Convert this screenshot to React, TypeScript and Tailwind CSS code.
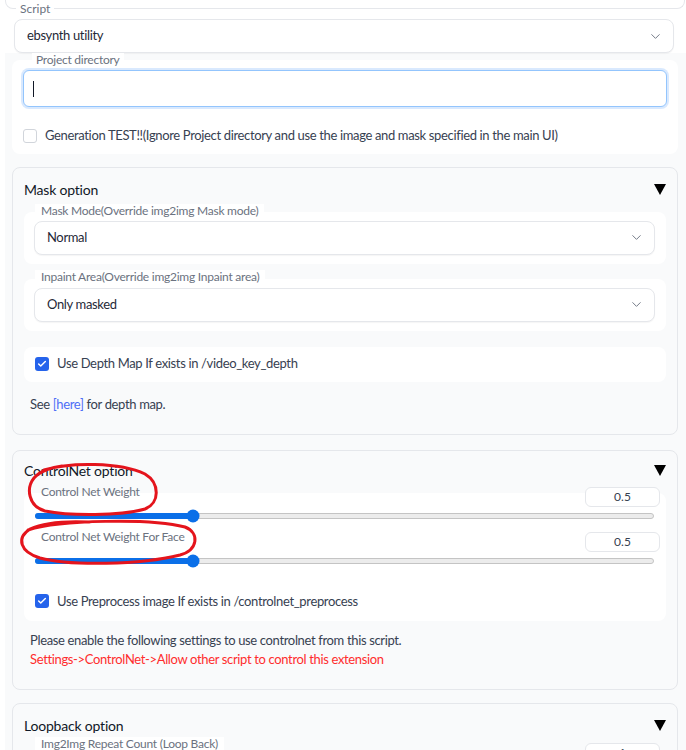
import { ChevronDown, Check } from 'lucide-react';

const font = { fontFamily: 'Lato, "Noto Sans", sans-serif' };

function Caret() {
  return (
    <svg width="12" height="11" viewBox="0 0 12 11" className="shrink-0">
      <polygon points="0,0 12,0 6,11" fill="#000" />
    </svg>
  );
}

function Select({ value }: { value: string }) {
  return (
    <div className="flex h-[34px] items-center justify-between rounded-lg border border-[#e5e7eb] bg-white pl-[12px] pr-[10px] text-[13px] tracking-[-0.35px] text-[#1f2937] shadow-[0_1px_1px_rgba(0,0,0,0.04)]">
      <span>{value}</span>
      <ChevronDown size={15} strokeWidth={1.5} className="text-[#6b7280]" />
    </div>
  );
}

function Box({ checked }: { checked: boolean }) {
  return checked ? (
    <span className="flex h-[14px] w-[14px] shrink-0 items-center justify-center rounded-[3px] bg-[#2563eb]">
      <Check size={10} strokeWidth={3.5} className="text-white" />
    </span>
  ) : (
    <span className="h-[14px] w-[14px] shrink-0 rounded-[3px] border border-[#d1d5db] bg-white" />
  );
}

function Label({ text }: { text: string }) {
  return (
    <span className="relative ml-[11px] block h-[14px] w-fit bg-white px-[6px] text-[12px] leading-[14px] tracking-[-0.25px] text-[#6b7280]">
      {text}
    </span>
  );
}

function SliderRow({ label }: { label: string }) {
  return (
    <div className="flex flex-col">
      <div className="flex h-[20px] items-start justify-between pl-[17px] pr-[6px]">
        <span className="-mt-[3px] text-[12px] leading-4 tracking-[-0.25px] text-[#6b7280]">{label}</span>
        <span className="flex h-[20px] w-[75px] items-center justify-center rounded-md border border-[#e5e7eb] bg-white text-[12px] text-[#374151]">
          0.5
        </span>
      </div>
      <div className="relative mt-[6px] ml-[11px] mr-[12px] h-[6px] rounded-full border border-[#c4c4c4] bg-[#ececec]">
        <div className="absolute -left-px -top-px h-[6px] w-[25.5%] rounded-full bg-[#0b6fe8]" />
        <div className="absolute left-[25.5%] top-1/2 h-[13px] w-[13px] -translate-x-1/2 -translate-y-1/2 rounded-full bg-[#0b6fe8]" />
      </div>
    </div>
  );
}

function Title({ text }: { text: string }) {
  return (
    <div className="flex h-[20px] items-center justify-between text-[14px] tracking-[-0.2px] text-[#111827]">
      <span>{text}</span>
      <Caret />
    </div>
  );
}

export default function App() {
  return (
    <div className="relative h-[750px] w-[686px] overflow-hidden bg-white" style={font}>
      <div className="ml-[5px] h-[9px] w-[680px] rounded-b-lg border border-t-0 border-[#e5e7eb]" />

      <div className="-mt-[8px] flex flex-col px-[14px] pr-[12px]">
        <span className="relative ml-[2px] block h-[15px] w-fit bg-white px-[4px] text-[12px] leading-[15px] text-[#6b7280]">
          Script
        </span>
        <div className="mt-[3px]">
          <Select value="ebsynth utility" />
        </div>
      </div>

      <div className="ml-[5px] flex flex-col bg-[#f9fafb] pl-[7px] pr-[8px]">
        <span className="relative ml-[20px] block h-[13px] w-fit bg-white px-[4px] text-[12px] leading-[13px] tracking-[-0.25px] text-[#6b7280]">
          Project directory
        </span>
        <div className="-mt-[6px] flex flex-col rounded-lg bg-white px-[11px] pt-[10px] pb-[8px]">
          <div className="flex h-[37px] items-center rounded-md border border-[#93c5fd] bg-white pl-[9px] shadow-[0_0_0_2px_rgba(191,219,254,0.6)]">
            <span className="h-[16px] w-px bg-[#111827]" />
          </div>
          <div className="mt-[19px] flex items-center gap-[8px] text-[13px] tracking-[-0.35px] text-[#374151]">
            <Box checked={false} />
            <span>Generation TEST!!(Ignore Project directory and use the image and mask specified in the main UI)</span>
          </div>
        </div>

        {/* Mask option */}
        <div className="mt-[13px] flex flex-col rounded-lg border border-[#e5e7eb] bg-[#f9fafb] px-[11px] pt-[12px] pb-[22px]">
          <Title text="Mask option" />
          <div className="mt-[4px]">
            <Label text="Mask Mode(Override img2img Mask mode)" />
          </div>
          <div className="-mt-[6px] rounded-lg bg-white pl-[10px] pr-[11px] py-[9px]">
            <Select value="Normal" />
          </div>
          <div className="mt-[6px]">
            <Label text="Inpaint Area(Override img2img Inpaint area)" />
          </div>
          <div className="-mt-[5px] rounded-lg bg-white pl-[10px] pr-[11px] py-[9px]">
            <Select value="Only masked" />
          </div>
          <div className="mt-[16px] flex h-[35px] items-center gap-[8px] rounded-lg bg-white pl-[11px] text-[13px] tracking-[-0.35px] text-[#374151]">
            <Box checked />
            <span>Use Depth Map If exists in /video_key_depth</span>
          </div>
          <p className="mt-[14px] pl-[6px] text-[13px] leading-[16px] tracking-[-0.35px] text-[#374151]">
            See <span className="text-[#4f6ef7]">[here]</span> for depth map.
          </p>
        </div>

        {/* ControlNet option */}
        <div className="mt-[15px] flex flex-col rounded-lg border border-[#e5e7eb] bg-[#f9fafb] px-[11px] pt-[10px] pb-[20px]">
          <Title text="ControlNet option" />
          <div className="mt-[12px] flex flex-col rounded-lg bg-white pb-[10px]">
            <div className="-mt-[6px]">
              <SliderRow label="Control Net Weight" />
            </div>
            <div className="mt-[13px]">
              <SliderRow label="Control Net Weight For Face" />
            </div>
            <div className="mt-[28px] flex items-center gap-[8px] pl-[11px] text-[13px] tracking-[-0.35px] text-[#374151]">
              <Box checked />
              <span>Use Preprocess image If exists in /controlnet_preprocess</span>
            </div>
          </div>
          <div className="mt-[10px] flex flex-col pl-[6px] text-[13px] leading-[19px] tracking-[-0.35px]">
            <span className="text-[#374151]">Please enable the following settings to use controlnet from this script.</span>
            <span className="text-[#ff2d2d]">Settings-&gt;ControlNet-&gt;Allow other script to control this extension</span>
          </div>
        </div>

        {/* Loopback option */}
        <div className="mt-[13px] flex flex-col rounded-lg border border-[#e5e7eb] bg-[#f9fafb] px-[11px] pt-[11px] pb-[20px]">
          <Title text="Loopback option" />
          <div className="mt-[2px] flex items-start justify-between pr-[6px]">
            <Label text="Img2Img Repeat Count (Loop Back)" />
            <span className="mt-[6px] flex h-[20px] w-[75px] items-center justify-center rounded-md border border-[#e5e7eb] bg-white text-[12px] text-[#374151]">
              1
            </span>
          </div>
        </div>
      </div>

      {/* red hand-drawn annotations */}
      <svg className="pointer-events-none absolute left-0 top-0" width="686" height="750" fill="none">
        <path
          d="M44 470 C70 462 120 462 145 474 C160 483 160 503 145 509 C120 516 70 516 45 511 C28 506 26 488 34 478 C40 471 52 467 62 466"
          stroke="#e4141c"
          strokeWidth="3"
          strokeLinecap="round"
        />
        <path
          d="M28 530 C60 520 150 518 185 527 C200 533 198 550 180 555 C140 565 70 566 40 558 C20 552 16 538 30 529 C45 522 70 521 90 522"
          stroke="#e4141c"
          strokeWidth="3"
          strokeLinecap="round"
        />
      </svg>
    </div>
  );
}
